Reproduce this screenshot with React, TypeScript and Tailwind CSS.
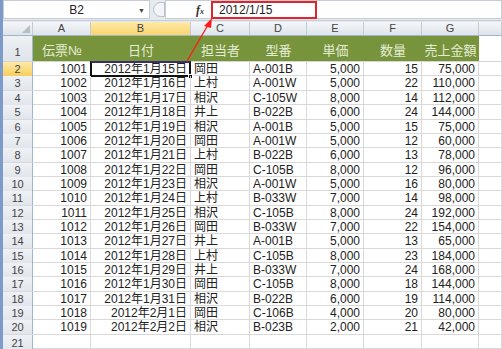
const rows: [string, string, string, string, string, string, string][] = [
  ["1001", "2012年1月15日", "岡田", "A-001B", "5,000", "15", "75,000"],
  ["1002", "2012年1月16日", "上村", "A-001W", "5,000", "22", "110,000"],
  ["1003", "2012年1月17日", "相沢", "C-105W", "8,000", "14", "112,000"],
  ["1004", "2012年1月18日", "井上", "B-022B", "6,000", "24", "144,000"],
  ["1005", "2012年1月19日", "相沢", "A-001B", "5,000", "15", "75,000"],
  ["1006", "2012年1月20日", "岡田", "A-001W", "5,000", "12", "60,000"],
  ["1007", "2012年1月21日", "上村", "B-022B", "6,000", "13", "78,000"],
  ["1008", "2012年1月22日", "岡田", "C-105B", "8,000", "12", "96,000"],
  ["1009", "2012年1月23日", "相沢", "A-001W", "5,000", "16", "80,000"],
  ["1010", "2012年1月24日", "上村", "B-033W", "7,000", "14", "98,000"],
  ["1011", "2012年1月25日", "相沢", "C-105B", "8,000", "24", "192,000"],
  ["1012", "2012年1月26日", "岡田", "B-033W", "7,000", "22", "154,000"],
  ["1013", "2012年1月27日", "井上", "A-001B", "5,000", "13", "65,000"],
  ["1014", "2012年1月28日", "上村", "C-105B", "8,000", "23", "184,000"],
  ["1015", "2012年1月29日", "井上", "B-033W", "7,000", "24", "168,000"],
  ["1016", "2012年1月30日", "岡田", "C-105B", "8,000", "18", "144,000"],
  ["1017", "2012年1月31日", "相沢", "B-022B", "6,000", "19", "114,000"],
  ["1018", "2012年2月1日", "岡田", "C-106B", "4,000", "20", "80,000"],
  ["1019", "2012年2月2日", "相沢", "B-023B", "2,000", "21", "42,000"],
];

const cols = "grid grid-cols-[30px_58px_100px_59px_57px_57px_58px_57px_1fr]";
const letters = ["A", "B", "C", "D", "E", "F", "G", ""];
const titles = ["伝票№", "日付", "担当者", "型番", "単価", "数量", "売上金額"];
const align = ["text-right", "text-right", "text-left", "text-left", "text-right", "text-right", "text-right"];

export default function App() {
  return (
    <div
      className="relative flex w-[502px] h-[349px] overflow-hidden bg-white text-[12px] text-[#222]"
      style={{ fontFamily: '"Liberation Sans", "Noto Sans CJK JP", sans-serif' }}
    >
      <div className="w-[3px] shrink-0 bg-[#7d9bc9]" />
      <div className="flex flex-1 flex-col">
        {/* formula bar */}
        <div className="flex h-[21px] items-center bg-[#e6eaf0] border-b border-[#c6ccd5]">
          <div className="relative flex h-[19px] w-[147px] items-center justify-center bg-white border border-[#c6ccd5]">
            <span>B2</span>
            <span className="absolute right-[4px] top-[5px] text-[7px] text-[#444]">▼</span>
          </div>
          <div className="ml-[3px] h-[15px] w-[12px] rounded-l-full border border-[#b9c0ca] bg-[#f2f4f7]" />
          <div className="flex h-[19px] flex-1 items-center bg-white border border-[#c6ccd5]">
            <span className="ml-[30px] w-[14px] italic text-[12px] font-bold text-[#333]" style={{ fontFamily: '"Liberation Serif", serif' }}>
              f<span className="text-[8px]">x</span>
            </span>
            <div className="ml-[1px] flex h-[18px] w-[106px] items-center border-2 border-[#e0242b] pl-[6px]">
              2012/1/15
            </div>
          </div>
        </div>
        <div className="h-[1px] bg-[#e6eaf0]" />

        {/* column headers */}
        <div className={`${cols} h-[14px] border-b border-[#9eb6ce] bg-gradient-to-b from-[#f4f6f9] to-[#dfe4ea] text-[11px] text-[#444]`}>
          <div className="relative border-r border-[#c4cbd5]">
            <div className="absolute bottom-[2px] right-[2px] h-0 w-0" style={{ borderBottom: "8px solid #b8bec8", borderLeft: "8px solid transparent" }} />
          </div>
          {letters.map((l, i) => (
            <div
              key={i}
              className={`flex items-center justify-center leading-none border-r border-[#c4cbd5] ${
                i === 1 ? "bg-gradient-to-b from-[#fde9a8] to-[#f9d56a]" : ""
              }`}
            >
              {l}
            </div>
          ))}
        </div>

        {/* title row */}
        <div className={`${cols} h-[27px] border-b border-[#d4d4d4]`}>
          <div className="flex items-end justify-center border-r border-[#9eb6ce] bg-gradient-to-b from-[#eef1f5] to-[#dfe4ea] pb-[1px] text-[11px] text-[#444]">
            1
          </div>
          {titles.map((t) => (
            <div key={t} className="flex items-center justify-center bg-[#77933c] pt-[4px] text-[13px] text-[#e4ecd4]">
              {t}
            </div>
          ))}
          <div className="border-r border-[#d4d4d4]" />
        </div>

        {/* data rows */}
        {rows.map((r, ri) => (
          <div key={ri} className={`${cols} h-[14.35px] leading-[14px] border-b border-[#d9d9d9]`}>
            <div
              className={`flex items-center justify-center border-r border-[#9eb6ce] text-[11px] text-[#444] ${
                ri === 0 ? "bg-gradient-to-b from-[#fde9a8] to-[#f7cf5c]" : "bg-gradient-to-b from-[#eef1f5] to-[#e2e6ec]"
              }`}
            >
              {ri + 2}
            </div>
            {r.map((c, ci) => (
              <div
                key={ci}
                className={`relative overflow-visible whitespace-nowrap border-r border-[#d9d9d9] px-[3px] ${align[ci]}`}
              >
                {c}
                {ri === 0 && ci === 1 && (
                  <>
                    <div className="pointer-events-none absolute -left-[1px] -top-[1px] -right-[1px] -bottom-[1px] border-2 border-[#111] border-t-[#3b2d6e]" />
                    <div className="absolute -bottom-[3px] -right-[3px] h-[5px] w-[5px] border border-white bg-[#111]" />
                  </>
                )}
              </div>
            ))}
            <div className="border-r border-[#d9d9d9]" />
          </div>
        ))}
        <div className={`${cols} h-[14.35px] border-b border-[#d9d9d9]`}>
          <div className="flex items-center justify-center border-r border-[#9eb6ce] bg-gradient-to-b from-[#eef1f5] to-[#e2e6ec] text-[11px] text-[#444]">
            21
          </div>
          {letters.map((_, i) => (
            <div key={i} className="border-r border-[#d9d9d9]" />
          ))}
        </div>
      </div>

      {/* red arrow */}
      <svg className="pointer-events-none absolute left-0 top-0" width="502" height="349">
        <line x1="187" y1="61" x2="208" y2="25" stroke="#ff1a1a" strokeWidth="1.3" />
        <polygon points="212,18 204,26 211,28" fill="#ff1a1a" />
      </svg>
    </div>
  );
}
